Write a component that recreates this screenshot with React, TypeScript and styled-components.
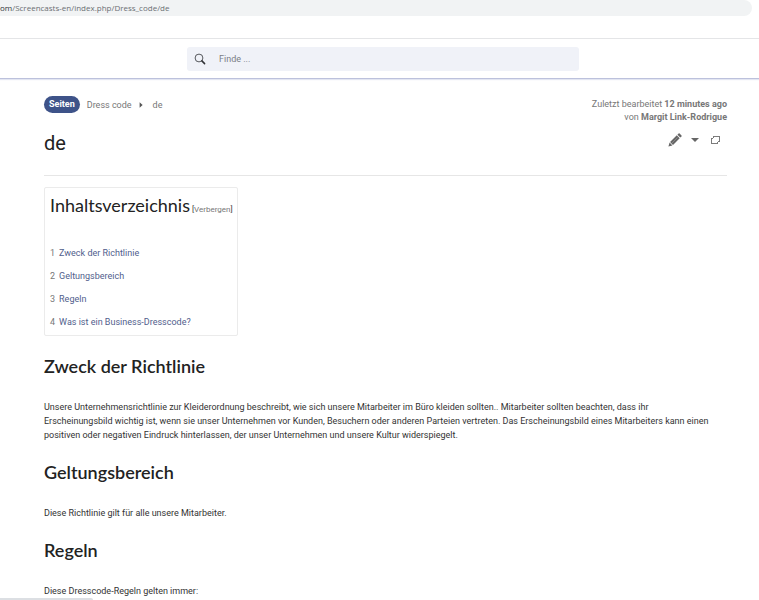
import React from "react";
import styled, { createGlobalStyle } from "styled-components";

const GlobalStyle = createGlobalStyle`
  *, *::before, *::after { box-sizing: border-box; }
  body {
    margin: 0;
    background: #fff;
    color: #333;
    font-family: Roboto, "Liberation Sans", sans-serif;
    font-size: 9px;
    line-height: 14px;
  }
  h1, h2, p, ol { margin: 0; padding: 0; }
  button { font: inherit; color: inherit; background: none; border: 0; padding: 0; cursor: pointer; }
  a { text-decoration: none; color: inherit; }
`;

const BrowserBar = styled.div`
  height: 39px;
  padding-right: 7px;
  border-bottom: 1px solid #e4e5e7;
`;

const AddressBar = styled.div`
  height: 16px;
  border-radius: 0 8px 8px 0;
  background: #f1f3f4;
  color: #6b6f73;
  font: 8px/16px "Open Sans", "Noto Sans", sans-serif;
  white-space: nowrap;
`;

const Host = styled.span`
  color: #303336;
`;

const Header = styled.header`
  display: flex;
  justify-content: center;
  padding: 8px 0 7px;
  border-bottom: 1px solid #bcc1dc;
  box-shadow: 0 1px 1px #e3e6f2;
`;

const SearchForm = styled.form`
  display: flex;
  align-items: center;
  width: 52%;
  max-width: 392px;
  height: 24px;
  margin-left: 7px;
  padding-left: 7px;
  gap: 13px;
  border-radius: 3px;
  background: #f0f2f8;
`;

const SearchButton = styled.button`
  display: flex;
  color: #303236;
`;

const SearchInput = styled.input`
  flex: 1;
  min-width: 0;
  border: 0;
  outline: 0;
  padding: 0;
  background: transparent;
  font: 9px/14px Roboto, sans-serif;
  color: #333;
  &::placeholder { color: #7b7f86; opacity: 1; }
`;

const Main = styled.main`
  padding: 17px 32px 0 44px;
`;

const TitleArea = styled.div`
  display: flex;
  justify-content: space-between;
  height: 80px;
  border-bottom: 1px solid #e6e6e6;
`;

const Breadcrumb = styled.nav`
  display: flex;
  align-items: center;
  height: 17px;
  color: #777;
`;

const Badge = styled.a`
  height: 17px;
  padding: 0 5px;
  margin-right: 7px;
  border-radius: 9px;
  background: #3e5389;
  color: #fff;
  font-weight: 700;
  line-height: 17px;
`;

const CrumbArrow = styled.svg`
  margin: 0 10px 0 7px;
`;

const PageTitle = styled.h1`
  margin-top: 18px;
  font-size: 20px;
  line-height: 24px;
  font-weight: 400;
  color: #222;
`;

const Meta = styled.div`
  text-align: right;
  line-height: 13px;
  padding-top: 2px;
  color: #777;
`;

const Tools = styled.div`
  display: flex;
  justify-content: flex-end;
  align-items: center;
  height: 16px;
  margin-top: 8px;
  padding-right: 7px;
`;

const ToolButton = styled.button<{ $gap?: number }>`
  display: flex;
  margin-left: ${({ $gap = 0 }) => $gap}px;
  color: #666;
`;

const Toc = styled.nav`
  width: fit-content;
  margin: 11px 0 18px;
  padding: 4px 4px 6px 5px;
  border: 1px solid #ebebeb;
  border-radius: 2px;
`;

const TocHead = styled.div`
  display: flex;
  align-items: baseline;
  gap: 2px;
  height: 50px;
  font-size: 8px;
  color: #333;
`;

const TocTitle = styled.h2`
  font: 400 18px/26px Lato, sans-serif;
  color: #222;
`;

const ToggleButton = styled.button`
  color: #777;
`;

const TocList = styled.ol`
  display: grid;
  gap: 9px;
  list-style: none;
  margin-top: 4px;
`;

const TocLink = styled.a`
  display: flex;
  gap: 4px;
  color: #515e8c;
`;

const TocNumber = styled.span`
  color: #777;
`;

const Section = styled.section`
  h2 {
    margin: 18px 0 22px;
    font: 600 18px/24px Lato, sans-serif;
    color: #222;
  }
  p { padding-right: 13px; }
`;

const StatusBar = styled.div`
  position: fixed;
  left: 0;
  bottom: 0;
  width: 93px;
  height: 2px;
  border-radius: 0 2px 0 0;
  background: #dcdfe3;
`;

const toc = ["Zweck der Richtlinie", "Geltungsbereich", "Regeln", "Was ist ein Business-Dresscode?"];

const sections = [
  {
    title: "Zweck der Richtlinie",
    text: "Unsere Unternehmensrichtlinie zur Kleiderordnung beschreibt, wie sich unsere Mitarbeiter im Büro kleiden sollten.. Mitarbeiter sollten beachten, dass ihr Erscheinungsbild wichtig ist, wenn sie unser Unternehmen vor Kunden, Besuchern oder anderen Parteien vertreten. Das Erscheinungsbild eines Mitarbeiters kann einen positiven oder negativen Eindruck hinterlassen, der unser Unternehmen und unsere Kultur widerspiegelt.",
  },
  { title: "Geltungsbereich", text: "Diese Richtlinie gilt für alle unsere Mitarbeiter." },
  { title: "Regeln", text: "Diese Dresscode-Regeln gelten immer:" },
];

export default function App() {
  return (
    <>
      <GlobalStyle />
      <BrowserBar>
        <AddressBar>
          <Host>om</Host>/Screencasts-en/index.php/Dress_code/de
        </AddressBar>
      </BrowserBar>
      <Header>
        <SearchForm role="search" onSubmit={(e) => e.preventDefault()}>
          <SearchButton type="submit" aria-label="Suchen">
            <svg width="12" height="12" viewBox="0 0 12 12" fill="none" stroke="currentColor">
              <circle cx="5" cy="5" r="3.9" strokeWidth="0.8" />
              <path d="M7.9 7.9 10.6 10.6" strokeWidth="1.5" strokeLinecap="round" />
            </svg>
          </SearchButton>
          <SearchInput type="search" placeholder="Finde ..." aria-label="Finde" />
        </SearchForm>
      </Header>
      <Main>
        <TitleArea>
          <div>
            <Breadcrumb aria-label="Pfad">
              <Badge href="#seiten">Seiten</Badge>
              <a href="#dress-code">Dress code</a>
              <CrumbArrow width="4" height="6" viewBox="0 0 4 6" aria-hidden="true">
                <path d="M0.6 0.2 3.6 3 0.6 5.8Z" fill="#555" />
              </CrumbArrow>
              <a href="#de">de</a>
            </Breadcrumb>
            <PageTitle>de</PageTitle>
          </div>
          <div>
            <Meta>
              <div>Zuletzt bearbeitet <b>12 minutes ago</b></div>
              <div>von <b>Margit Link-Rodrigue</b></div>
            </Meta>
            <Tools>
              <ToolButton aria-label="Bearbeiten">
                <svg width="14" height="14" viewBox="0 0 14 14" fill="currentColor">
                  <path d="M0.4 13.6 1.6 9.6 4.4 12.4Z" />
                  <path d="M2.1 9 8.8 2.3 11.7 5.2 5 11.9Z" />
                  <path d="M9.4 1.7 10.6 0.5Q11.1 0 11.6 0.5L13.5 2.4Q14 2.9 13.5 3.4L12.3 4.6Z" />
                  <path d="M4 10 9.5 4.5" stroke="#aaa" strokeWidth="0.5" />
                </svg>
              </ToolButton>
              <ToolButton $gap={9} aria-label="Weitere Optionen">
                <svg width="8" height="4" viewBox="0 0 8 4" fill="currentColor">
                  <path d="M0 0H8L4 4Z" />
                </svg>
              </ToolButton>
              <ToolButton $gap={12} aria-label="Vollbild">
                <svg width="9" height="8" viewBox="0 0 9 8" fill="none" stroke="currentColor" shapeRendering="crispEdges" opacity="0.85">
                  <path d="M2 0.5H8.5V6M2.5 0V2M8 5.5H7" />
                  <path d="M2 2.5H0.5V7.5H6.5V6" />
                </svg>
              </ToolButton>
            </Tools>
          </div>
        </TitleArea>
        <Toc aria-label="Inhaltsverzeichnis">
          <TocHead>
            <TocTitle>Inhaltsverzeichnis</TocTitle>
            <span>[<ToggleButton>Verbergen</ToggleButton>]</span>
          </TocHead>
          <TocList>
            {toc.map((label, i) => (
              <li key={label}>
                <TocLink href={`#abschnitt-${i + 1}`}>
                  <TocNumber>{i + 1}</TocNumber>
                  {label}
                </TocLink>
              </li>
            ))}
          </TocList>
        </Toc>
        {sections.map(({ title, text }, i) => (
          <Section key={title} id={`abschnitt-${i + 1}`}>
            <h2>{title}</h2>
            <p>{text}</p>
          </Section>
        ))}
      </Main>
      <StatusBar />
    </>
  );
}
